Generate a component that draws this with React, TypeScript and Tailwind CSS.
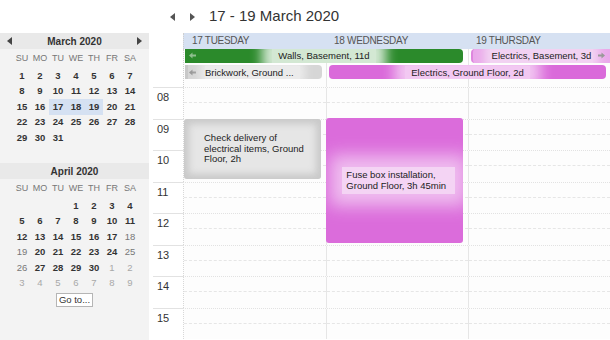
import clsx from "clsx";

type Day = { d?: number; tone?: "bold" | "muted" | "faint"; sel?: boolean };

const weekDays = ["SU", "MO", "TU", "WE", "TH", "FR", "SA"];
const hours = ["08", "09", "10", "11", "12", "13", "14", "15"];

function buildMarch(): Day[] {
  const days: Day[] = [];
  for (let i = 1; i <= 31; i++) days.push({ d: i, tone: "bold", sel: i >= 17 && i <= 19 });
  while (days.length < 42) days.push({});
  return days;
}

function buildApril(): Day[] {
  const muted = [18, 19, 25, 26];
  const days: Day[] = [{}, {}, {}];
  for (let i = 1; i <= 30; i++) days.push({ d: i, tone: muted.includes(i) ? "muted" : "bold" });
  for (let i = 1; i <= 9; i++) days.push({ d: i, tone: "faint" });
  return days;
}

function Tri({ dir, className }: { dir: "left" | "right"; className?: string }) {
  return (
    <svg width="5" height="8" viewBox="0 0 5 8" className={className}>
      {dir === "left" ? <path d="M5 0 L0 4 L5 8 Z" fill="currentColor" /> : <path d="M0 0 L5 4 L0 8 Z" fill="currentColor" />}
    </svg>
  );
}

function SmallArrow({ dir }: { dir: "left" | "right" }) {
  return (
    <svg width="7" height="7" viewBox="0 0 7 7">
      {dir === "left" ? (
        <path d="M0 3.5 L3.5 0.5 L3.5 2.5 L7 2.5 L7 4.5 L3.5 4.5 L3.5 6.5 Z" fill="currentColor" />
      ) : (
        <path d="M7 3.5 L3.5 0.5 L3.5 2.5 L0 2.5 L0 4.5 L3.5 4.5 L3.5 6.5 Z" fill="currentColor" />
      )}
    </svg>
  );
}

function MiniMonth({ title, days, arrows }: { title: string; days: Day[]; arrows?: boolean }) {
  return (
    <div className="mb-[2px] flex flex-col">
      <div className="flex h-[16px] items-center justify-between bg-[#e9e9e9] px-[7px] text-[#333]">
        <span className="w-[5px]">{arrows && <Tri dir="left" className="text-[#444]" />}</span>
        <span className="text-[10px] font-bold">{title}</span>
        <span className="w-[5px]">{arrows && <Tri dir="right" className="text-[#444]" />}</span>
      </div>
      <div className="mt-[2px] grid h-[15px] grid-cols-[repeat(7,18px)] items-center pl-[13px] text-[9px] text-[#777]">
        {weekDays.map((w) => (
          <div key={w} className="text-center">
            {w}
          </div>
        ))}
      </div>
      <div className="mt-[2px] grid grid-cols-[repeat(7,18px)] grid-rows-[repeat(6,15.5px)] pl-[13px] text-[9.5px]">
        {days.map((day, idx) => (
          <div
            key={title + idx}
            className={clsx("flex items-center justify-center", {
              "bg-[#d5e1f2]": day.sel,
              "font-bold text-[#333]": day.tone === "bold",
              "text-[#777]": day.tone === "muted",
              "text-[#a8a8a8]": day.tone === "faint",
            })}
          >
            {day.d}
          </div>
        ))}
      </div>
    </div>
  );
}

export default function App() {
  return (
    <div className="flex h-[340px] w-[610px] flex-col overflow-hidden bg-white font-['Liberation_Sans',Arial,sans-serif] text-[#222]">
      <div className="flex h-[33px] shrink-0 items-center">
        <div className="w-[170px]" />
        <Tri dir="left" className="text-[#555]" />
        <div className="w-[15px]" />
        <Tri dir="right" className="text-[#555]" />
        <div className="ml-[14px] text-[15px] text-[#333]">17 - 19 March 2020</div>
      </div>
      <div className="flex flex-1">
        <div className="flex w-[149px] flex-col bg-[#f3f3f3]">
          <MiniMonth title="March 2020" days={buildMarch()} arrows />
          <MiniMonth title="April 2020" days={buildApril()} />
          <div className="flex justify-center">
            <button className="h-[14px] w-[37px] border border-[#b5b5b5] bg-white text-[9.5px] leading-[12px] text-[#333]">
              Go to...
            </button>
          </div>
        </div>
        <div className="flex flex-1 flex-col">
          {/* day headers */}
          <div className="flex h-[16px]">
            <div className="w-[34px]" />
            <div className="grid flex-1 grid-cols-3 border-l border-dotted border-[#cfcfcf] bg-[#d6e1f2] text-[10px] tracking-[-0.3px] text-[#555]">
              <div className="pl-[8px] leading-[16px]">17 TUESDAY</div>
              <div className="pl-[8px] leading-[16px]">18 WEDNESDAY</div>
              <div className="pl-[8px] leading-[16px]">19 THURSDAY</div>
            </div>
          </div>
          {/* all-day */}
          <div className="flex h-[38px]">
            <div className="w-[34px]" />
            <div className="grid flex-1 grid-cols-3 grid-rows-[14px_14px_1fr] gap-y-[2px] border-l border-dotted border-[#cfcfcf] bg-[#fdfdfd] text-[9.5px]">
              <div className="col-start-2 row-span-3 row-start-1 border-l border-[#e6e6e6]" />
              <div className="col-start-3 row-span-3 row-start-1 border-l border-[#e6e6e6]" />
              <div className="relative col-span-2 col-start-1 row-start-1 ml-[1px] mr-[5px] flex items-center justify-center overflow-hidden rounded-r-[4px] bg-[#2b8a2b]">
                <span className="absolute left-[4px] top-[3px] text-[#8fbf8f]">
                  <SmallArrow dir="left" />
                </span>
                <span className="bg-[#d3e8d3] px-[6px] leading-[14px] shadow-[0_0_12px_10px_#d3e8d3]">Walls, Basement, 11d</span>
              </div>
              <div className="relative col-start-3 row-start-1 ml-[3px] flex items-center justify-center overflow-hidden rounded-l-[4px] border-l-2 border-[#de86de] bg-[#eaa9ea]">
                <span className="bg-[#f2d2f2] px-[2px] leading-[14px] shadow-[0_0_8px_6px_#f2d2f2]">Electrics, Basement, 3d</span>
                <span className="absolute right-[5px] top-[3px] text-[#999]">
                  <SmallArrow dir="right" />
                </span>
              </div>
              <div className="relative col-start-1 row-start-2 ml-[1px] mr-[4px] flex items-center overflow-hidden rounded-r-[4px] bg-[#d6d6d6] shadow-[inset_3px_0_0_#c8c8c8]">
                <span className="ml-[4px] text-[#999]">
                  <SmallArrow dir="left" />
                </span>
                <span className="ml-[9px] bg-[#ebebeb] pr-[6px] leading-[13px] shadow-[0_0_8px_5px_#ebebeb]">Brickwork, Ground ...</span>
              </div>
              <div className="col-span-2 col-start-2 row-start-2 ml-[3px] mr-[4px] flex items-center justify-center overflow-hidden rounded-[4px] bg-[#da6ada]">
                <span className="bg-[#f2c8f2] px-[6px] leading-[13px] shadow-[0_0_14px_10px_#f2c8f2]">Electrics, Ground Floor, 2d</span>
              </div>
            </div>
          </div>
          {/* time grid */}
          <div className="relative flex flex-1 flex-col">
            {hours.map((h) => (
              <div key={h} className="flex h-[31.5px] shrink-0">
                <div className="w-[34px] pl-[4px]">
                  <div className="h-full border-t border-[#e2e2e2] pl-[4px] pt-[3px] text-[11px] leading-[12px] text-[#333]">{h}</div>
                </div>
                <div className="grid flex-1 grid-cols-3 border-l border-t border-dotted border-l-[#d8d8d8] border-t-[#e2e2e2] bg-[#fdfdfd]">
                  {[0, 1, 2].map((c) => (
                    <div key={c} className={clsx("h-full", c > 0 && "border-l border-[#e6e6e6]")}>
                      <div className="h-1/2 border-b border-dashed border-[#e6e6e6]" />
                    </div>
                  ))}
                </div>
              </div>
            ))}
            {/* events */}
            <div className="absolute inset-y-0 left-[34px] right-0 grid grid-cols-3 text-[9.5px] leading-[10.5px] text-[#222]">
              <div className="relative">
                <div className="absolute left-[1px] top-[32px] h-[60px] w-[137px] rounded-[3px] bg-[#e6e6e6] pl-[20px] pr-[8px] pt-[14px] shadow-[inset_0_0_7px_5px_#c9c9c9]">
                  Check delivery of electrical items, Ground Floor, 2h
                </div>
              </div>
              <div className="relative">
                <div className="absolute left-[1px] top-[31px] flex h-[125px] w-[137px] items-center overflow-hidden rounded-[3px] bg-[#db6cdb] pl-[16px] pr-[8px]">
                  <div className="bg-[#f4d4f4] px-[4px] py-[3px] shadow-[0_0_16px_12px_#efbdef]">
                    Fuse box installation, Ground Floor, 3h 45min
                  </div>
                </div>
              </div>
              <div />
            </div>
          </div>
        </div>
      </div>
    </div>
  );
}
